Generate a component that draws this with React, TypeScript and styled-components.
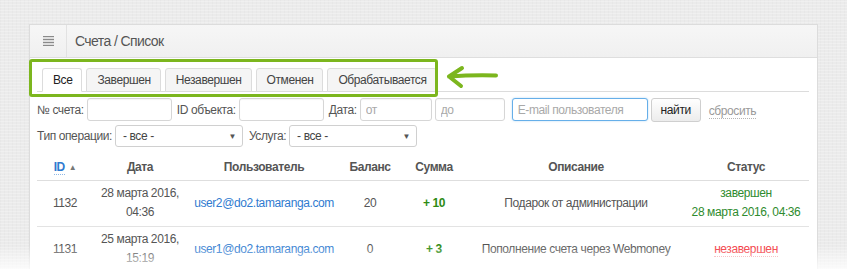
import React from 'react';
import styled, { createGlobalStyle } from 'styled-components';

const GlobalStyle = createGlobalStyle`
    html, body {
        margin: 0;
        padding: 0;
    }
    body {
        font-family: 'Liberation Sans', Arial, sans-serif;
        font-size: 12px;
        letter-spacing: -0.4px;
        color: #555;
        background-color: #ebebeb;
        background-image:
            repeating-linear-gradient(0deg, rgba(255, 255, 255, 0.25) 0 1px, transparent 1px 3px),
            repeating-linear-gradient(90deg, rgba(0, 0, 0, 0.015) 0 1px, transparent 1px 4px);
    }
`;

interface Row {
    id: number;
    date: string;
    time: string;
    email: string;
    balance: string;
    sum: string;
    description: string;
    status: 'done' | 'pending';
    statusDate?: string;
}

const rows: Row[] = [
    {
        id: 1132,
        date: '28 марта 2016,',
        time: '04:36',
        email: 'user2@do2.tamaranga.com',
        balance: '20',
        sum: '+ 10',
        description: 'Подарок от администрации',
        status: 'done',
        statusDate: '28 марта 2016, 04:36',
    },
    {
        id: 1131,
        date: '25 марта 2016,',
        time: '15:19',
        email: 'user1@do2.tamaranga.com',
        balance: '0',
        sum: '+ 3',
        description: 'Пополнение счета через Webmoney',
        status: 'pending',
    },
];

const tabs = ['Все', 'Завершен', 'Незавершен', 'Отменен', 'Обрабатывается'];

const App = () => (
    <Page>
        <GlobalStyle />
        <Panel>
            <PanelHeader>
                <MenuCell>
                    <svg width="11" height="10" viewBox="0 0 11 10">
                        {[0.5, 3.5, 6.5, 9.5].map(y => (
                            <line key={y} x1="0" x2="11" y1={y} y2={y} stroke="#8a8a8a" strokeWidth="1.4" />
                        ))}
                    </svg>
                </MenuCell>
                <Title>Счета / Список</Title>
            </PanelHeader>
            <PanelBody>
                <Tabs>
                    {tabs.map((t, i) => (
                        <Tab key={t} active={i === 0}>
                            {t}
                        </Tab>
                    ))}
                </Tabs>
                <Highlight />
                <Arrow width="54" height="28" viewBox="0 0 54 28">
                    <path
                        d="M3 13.5 C 17 12.5, 32 12, 50 12.5 M3 13.5 L 16 5 M3 13.5 L 15 23"
                        fill="none"
                        stroke="#7cb61e"
                        strokeWidth="4"
                        strokeLinecap="round"
                        strokeLinejoin="round"
                    />
                </Arrow>

                <FilterRow>
                    <Label>№ счета:</Label>
                    <Input w={85} gap={5} />
                    <Label>ID объекта:</Label>
                    <Input w={85} gap={5} />
                    <Label>Дата:</Label>
                    <Input w={72} gap={3} placeholder="от" />
                    <Input w={70} gap={7} placeholder="до" />
                    <Input w={136} gap={3} focused placeholder="E-mail пользователя" />
                    <Button>найти</Button>
                    <Reset>сбросить</Reset>
                </FilterRow>
                <FilterRow>
                    <Label>Тип операции:</Label>
                    <Select gap={6}>
                        <span>- все -</span>
                        <Caret>▼</Caret>
                    </Select>
                    <Label>Услуга:</Label>
                    <Select gap={0}>
                        <span>- все -</span>
                        <Caret>▼</Caret>
                    </Select>
                </FilterRow>

                <Table>
                    <colgroup>
                        <col style={{ width: 56 }} />
                        <col style={{ width: 94 }} />
                        <col style={{ width: 154 }} />
                        <col style={{ width: 58 }} />
                        <col style={{ width: 70 }} />
                        <col style={{ width: 214 }} />
                        <col />
                    </colgroup>
                    <thead>
                        <tr>
                            <Th>
                                <SortLink>ID</SortLink>
                                <SortMark>▲</SortMark>
                            </Th>
                            <Th>Дата</Th>
                            <Th>Пользователь</Th>
                            <Th>Баланс</Th>
                            <Th>Сумма</Th>
                            <Th>Описание</Th>
                            <Th>Статус</Th>
                        </tr>
                    </thead>
                    <tbody>
                        {rows.map(r => (
                            <tr key={r.id}>
                                <Td>{r.id}</Td>
                                <Td>
                                    {r.date}
                                    <br />
                                    {r.time}
                                </Td>
                                <Td>
                                    <UserLink>{r.email}</UserLink>
                                </Td>
                                <Td>{r.balance}</Td>
                                <Td>
                                    <Sum>{r.sum}</Sum>
                                </Td>
                                <Td>{r.description}</Td>
                                <Td>
                                    {r.status === 'done' ? (
                                        <Done>
                                            завершен
                                            <br />
                                            {r.statusDate}
                                        </Done>
                                    ) : (
                                        <Pending>незавершен</Pending>
                                    )}
                                </Td>
                            </tr>
                        ))}
                    </tbody>
                </Table>
            </PanelBody>
        </Panel>
        <Fade />
    </Page>
);

export default App;

const Page = styled.div`
    position: relative;
    height: 269px;
    overflow: hidden;
    padding: 24px 29px 0 29px;
    box-sizing: border-box;
`;

const Panel = styled.div`
    width: 789px;
    background: #fff;
    border: 1px solid #dcdcdc;
    box-sizing: border-box;
`;

const PanelHeader = styled.div`
    display: flex;
    align-items: stretch;
    height: 32px;
    background: linear-gradient(#f6f6f6, #f0f0f0);
    border-bottom: 1px solid #dedede;
`;

const MenuCell = styled.div`
    width: 36px;
    display: flex;
    align-items: center;
    justify-content: center;
    border-right: 1px solid #e2e2e2;
`;

const Title = styled.div`
    display: flex;
    align-items: center;
    padding-left: 8px;
    font-size: 14px;
    letter-spacing: -0.6px;
    color: #555;
`;

const PanelBody = styled.div`
    position: relative;
    padding: 10px 8px 0 7px;
`;

const Tabs = styled.div`
    display: flex;
    gap: 4px;
    padding-left: 5px;
    border-bottom: 1px solid #dcdcdc;
`;

const Tab = styled.div<{ active: boolean }>`
    height: 22px;
    line-height: 22px;
    padding: 0 9px 0 10px;
    margin-bottom: -1px;
    border: 1px solid #dcdcdc;
    border-bottom-color: ${({ active }) => (active ? '#fff' : '#dcdcdc')};
    border-radius: 3px 3px 0 0;
    background: ${({ active }) => (active ? '#fff' : '#f5f5f5')};
    color: ${({ active }) => (active ? '#222' : '#444')};
`;

const Highlight = styled.div`
    position: absolute;
    left: -1px;
    top: 1px;
    width: 409px;
    height: 38px;
    border: 3px solid #7cb61e;
    border-radius: 3px;
    box-sizing: border-box;
    pointer-events: none;
`;

const Arrow = styled.svg`
    position: absolute;
    left: 416px;
    top: 5px;
`;

const FilterRow = styled.div`
    display: flex;
    align-items: center;
    margin-top: 5px;

    & + & {
        margin-top: 3px;
    }
`;

const Label = styled.span`
    color: #555;
    margin-right: 3px;
    white-space: nowrap;
`;

const Input = styled.input<{ w: number; gap: number; focused?: boolean }>`
    width: ${({ w }) => w}px;
    height: 23px;
    margin: 0 ${({ gap }) => gap}px 0 0;
    padding: 0 5px;
    box-sizing: border-box;
    font: inherit;
    letter-spacing: -0.4px;
    color: #555;
    border: 1px solid ${({ focused }) => (focused ? '#66afe9' : '#d6d6d6')};
    border-radius: 3px;
    box-shadow: ${({ focused }) => (focused ? '0 0 2px rgba(102, 175, 233, 0.5)' : 'inset 0 1px 1px rgba(0,0,0,0.04)')};
    outline: none;

    &::placeholder {
        color: #a9a9a9;
    }
`;

const Button = styled.button`
    width: 50px;
    height: 24px;
    margin: 1px 8px 0 0;
    padding: 0;
    font: inherit;
    letter-spacing: -0.4px;
    color: #222;
    background: linear-gradient(#fff, #ececec);
    border: 1px solid #cfcfcf;
    border-radius: 3px;
`;

const Reset = styled.span`
    color: #9a9a9a;
    border-bottom: 1px dotted #b5b5b5;
    line-height: 14px;
    margin-top: 3px;
`;

const Select = styled.div<{ gap: number }>`
    display: flex;
    align-items: center;
    justify-content: space-between;
    width: 128px;
    height: 22px;
    margin-right: ${({ gap }) => gap}px;
    padding: 0 6px 0 7px;
    box-sizing: border-box;
    border: 1px solid #d0d0d0;
    border-radius: 3px;
    background: #fff;
    color: #444;
`;

const Caret = styled.span`
    font-size: 8px;
    color: #555;
`;

const Table = styled.table`
    width: 100%;
    margin-top: 7px;
    table-layout: fixed;
    border-collapse: collapse;
`;

const Th = styled.th`
    height: 26px;
    padding: 0 4px;
    font-weight: bold;
    color: #555;
    text-align: center;
    border-bottom: 1px solid #dedede;
`;

const SortLink = styled.span`
    color: #2f7bd0;
    border-bottom: 1px dotted #8fb8e6;
`;

const SortMark = styled.span`
    font-size: 8px;
    color: #777;
    margin-left: 4px;
    vertical-align: 1px;
`;

const Td = styled.td`
    padding: 3px 4px 4px;
    line-height: 19px;
    text-align: center;
    color: #555;
    border-bottom: 1px solid #e3e3e3;
    white-space: nowrap;
`;

const UserLink = styled.span`
    color: #2f7bd0;
`;

const Sum = styled.span`
    color: #2e8b14;
    font-weight: bold;
`;

const Done = styled.span`
    color: #2e8b2e;
`;

const Pending = styled.span`
    color: #f2333a;
    border-bottom: 1px dotted #f4a0a4;
`;

const Fade = styled.div`
    position: absolute;
    left: 0;
    right: 0;
    bottom: 0;
    height: 24px;
    background: linear-gradient(rgba(255, 255, 255, 0), rgba(255, 255, 255, 0.8));
    pointer-events: none;
`;
